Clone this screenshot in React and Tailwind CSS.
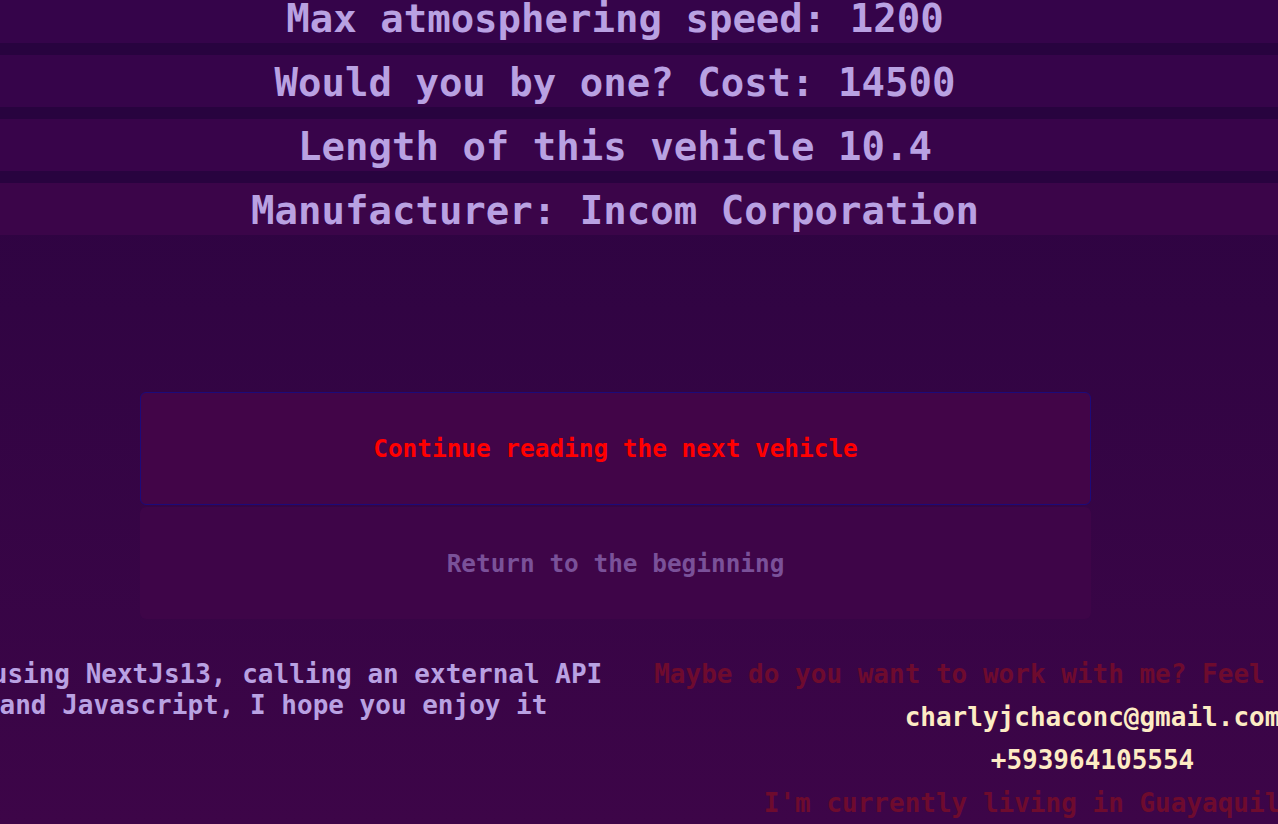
import React from "react";

const specs = [
  { text: "Max atmosphering speed: 1200", bg: "bg-[#35044a]" },
  { text: "Would you by one? Cost: 14500", bg: "bg-[#36044a]" },
  { text: "Length of this vehicle 10.4", bg: "bg-[#38044a]" },
  { text: "Manufacturer: Incom Corporation", bg: "bg-[#3b0549]" },
];

export default function App() {
  return (
    <div
      className="min-h-screen w-full overflow-hidden bg-gradient-to-b from-[#2a0340] to-[#3d0548]"
      style={{ fontFamily: '"DejaVu Sans Mono", "Liberation Mono", monospace' }}
    >
      {/* Vehicle details */}
      <div className="-mt-[9px] flex flex-col gap-[12px] bg-[#28033f]">
        {specs.map((s) => (
          <div
            key={s.text}
            className={`h-[52px] flex items-center justify-center pr-[48px] pt-[3px] ${s.bg}`}
          >
            <span className="text-[39px] leading-none font-bold text-[#b9a1e2] whitespace-nowrap">
              {s.text}
            </span>
          </div>
        ))}
      </div>

      {/* Actions */}
      <div className="mt-[157px] ml-[140px] w-[951px] flex flex-col gap-[2px]">
        <button className="h-[113px] pt-[2px] rounded-md border border-[#1c0a7a] bg-[#420548] text-[24.4px] font-bold text-[#ff0000]">
          Continue reading the next vehicle
        </button>
        <button className="h-[112px] pt-[3px] rounded-md bg-[#3e0548] text-[24.4px] font-bold text-[#7a5199]">
          Return to the beginning
        </button>
      </div>

      {/* Footer */}
      <div className="mt-[40px] -ml-[136px] w-[1638px] flex text-[26px] font-bold">
        <div className="w-[819px] flex flex-col items-center leading-[31px] text-[#b9a1e2]">
          <p className="whitespace-nowrap">by using NextJs13, calling an external API</p>
          <p className="whitespace-nowrap">and Javascript, I hope you enjoy it</p>
        </div>
        <div className="w-[819px] flex flex-col items-center gap-[12px] leading-[31px]">
          <p className="whitespace-nowrap text-[#6e0b2e]">
            Maybe do you want to work with me? Feel free to write me
          </p>
          <p className="whitespace-nowrap text-[#fdebc4]">charlyjchaconc@gmail.com</p>
          <p className="whitespace-nowrap text-[#fdebc4]">+593964105554</p>
          <p className="whitespace-nowrap text-[#6e0b2e]">
            I'm currently living in Guayaquil, Ecuador
          </p>
        </div>
      </div>
    </div>
  );
}
